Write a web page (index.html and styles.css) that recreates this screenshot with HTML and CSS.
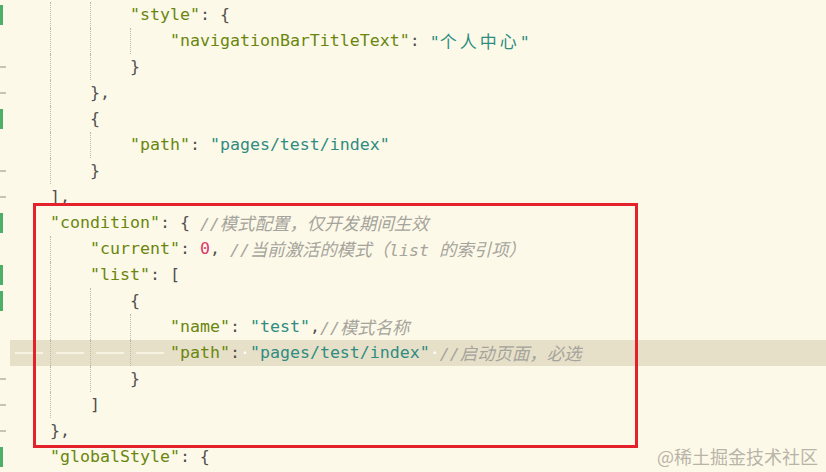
FILE: index.html
```html
<!DOCTYPE html>
<html lang="zh-CN">
<head>
    <meta charset="UTF-8">
    <meta name="viewport" content="width=device-width, initial-scale=1.0">
    <title>pages.json</title>
    <link rel="stylesheet" href="styles.css">
</head>
<body>
    <div class="editor">
        <div class="line"><span class="gutter mod"></span><span class="code"><span class="ind"></span><span class="ind"></span><span class="ind"></span><span class="k">"style"</span><span class="p">: {</span></span></div>
        <div class="line"><span class="gutter"></span><span class="code"><span class="ind"></span><span class="ind"></span><span class="ind"></span><span class="ind"></span><span class="k">"navigationBarTitleText"</span><span class="p">: </span><span class="s">"<span class="cs">个人中心</span>"</span></span></div>
        <div class="line"><span class="gutter del"></span><span class="code"><span class="ind"></span><span class="ind"></span><span class="ind"></span><span class="p">}</span></span></div>
        <div class="line"><span class="gutter del"></span><span class="code"><span class="ind"></span><span class="ind"></span><span class="p">},</span></span></div>
        <div class="line"><span class="gutter mod"></span><span class="code"><span class="ind"></span><span class="ind"></span><span class="p">{</span></span></div>
        <div class="line"><span class="gutter"></span><span class="code"><span class="ind"></span><span class="ind"></span><span class="ind"></span><span class="k">"path"</span><span class="p">: </span><span class="s">"pages/test/index"</span></span></div>
        <div class="line"><span class="gutter del"></span><span class="code"><span class="ind"></span><span class="ind"></span><span class="p">}</span></span></div>
        <div class="line"><span class="gutter del"></span><span class="code"><span class="ind"></span><span class="p">],</span></span></div>
        <div class="line"><span class="gutter mod"></span><span class="code"><span class="ind"></span><span class="k">"condition"</span><span class="p">: { </span><span class="c">//<span class="cn">模式配置，仅开发期间生效</span></span></span></div>
        <div class="line"><span class="gutter"></span><span class="code"><span class="ind"></span><span class="ind"></span><span class="k">"current"</span><span class="p">: </span><span class="n">0</span><span class="p">, </span><span class="c">//<span class="cn">当前激活的模式（</span>list <span class="cn">的索引项）</span></span></span></div>
        <div class="line"><span class="gutter mod"></span><span class="code"><span class="ind"></span><span class="ind"></span><span class="k">"list"</span><span class="p">: [</span></span></div>
        <div class="line"><span class="gutter mod"></span><span class="code"><span class="ind"></span><span class="ind"></span><span class="ind"></span><span class="p">{</span></span></div>
        <div class="line"><span class="gutter"></span><span class="code"><span class="ind"></span><span class="ind"></span><span class="ind"></span><span class="ind"></span><span class="k">"name"</span><span class="p">: </span><span class="s">"test"</span><span class="p">,</span><span class="c">//<span class="cn">模式名称</span></span></span></div>
        <div class="line current"><span class="gutter"></span><span class="code"><span class="ind tab"></span><span class="ind tab"></span><span class="ind tab"></span><span class="ind tab"></span><span class="k">"path"</span><span class="p">:</span><span class="ws">·</span><span class="s">"pages/test/index"</span><span class="ws">·</span><span class="c">//<span class="cn">启动页面，必选</span></span></span></div>
        <div class="line"><span class="gutter del"></span><span class="code"><span class="ind"></span><span class="ind"></span><span class="ind"></span><span class="p">}</span></span></div>
        <div class="line"><span class="gutter del"></span><span class="code"><span class="ind"></span><span class="ind"></span><span class="p">]</span></span></div>
        <div class="line"><span class="gutter del"></span><span class="code"><span class="ind"></span><span class="p">},</span></span></div>
        <div class="line"><span class="gutter mod"></span><span class="code"><span class="ind"></span><span class="k">"globalStyle"</span><span class="p">: {</span></span></div>

        <div class="mark"></div>
        <div class="watermark">@稀土掘金技术社区</div>
    </div>
</body>
</html>
```

FILE: styles.css
```css
body {
    margin: 0;
    background-color: #fdf9e8;
    overflow: hidden;
}
.editor {
    position: relative;
    width: 826px;
    height: 472px;
    padding-top: 2px;
    box-sizing: border-box;
    font-family: "DejaVu Sans Mono", "Noto Sans CJK SC", monospace;
    font-size: 16.6px;
    color: #555;
}
.line {
    display: flex;
    height: 26px;
    line-height: 26px;
    white-space: pre;
}
.gutter {
    position: relative;
    width: 10px;
    flex-shrink: 0;
}
.gutter.mod::before {
    content: "";
    position: absolute;
    left: 0;
    top: 3px;
    width: 3px;
    height: 20px;
    background-color: #4caf6a;
}
.gutter.del::before {
    content: "";
    position: absolute;
    left: 0;
    top: 12px;
    width: 6px;
    height: 2px;
    background-color: #c9c4b2;
}
.code {
    flex: 1;
    display: flex;
    align-items: stretch;
}
.current .code {
    background-color: #e7e0c8;
}
.ind {
    position: relative;
    display: inline-block;
    width: 40px;
    flex-shrink: 0;
}
.ind + .ind {
    border-left: 1px dotted #bdb9aa;
    width: 39px;
}
.ind.tab::after {
    content: "";
    position: absolute;
    left: 5px;
    top: 12px;
    width: 28px;
    height: 2px;
    background-color: #f7f3e3;
}
.k {
    color: #6a860e;
}
.s {
    color: #2f8c82;
}
.p {
    color: #505050;
}
.n {
    color: #d83a6e;
}
.c {
    color: #a5a49c;
    font-style: italic;
}
.cn {
    font-family: "Noto Sans CJK SC", sans-serif;
    font-size: 17.4px;
}
.cs {
    font-family: "Noto Sans CJK SC", sans-serif;
    font-size: 17px;
    letter-spacing: 3px;
}
.ws {
    color: #ffffff;
}
.mark {
    position: absolute;
    left: 33px;
    top: 203px;
    width: 605px;
    height: 245px;
    box-sizing: border-box;
    border: 3px solid #e4222b;
}
.watermark {
    position: absolute;
    right: 8px;
    bottom: 5px;
    font-family: "Noto Sans CJK SC", sans-serif;
    font-size: 18px;
    line-height: 22px;
    color: #b9b4a8;
}
```
